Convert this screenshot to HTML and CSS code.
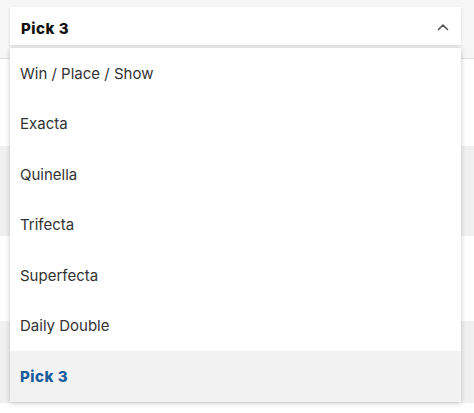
FILE: index.html
```html
<!DOCTYPE html>
<html>
<head>
<meta charset="utf-8">
<link rel="stylesheet" href="styles.css">
</head>
<body>
<div class="page">
  <div class="top">
    <div class="select">
      <div class="select-head">
        <span class="select-value">Pick 3</span>
        <svg class="chev" width="12" height="8" viewBox="0 0 12 8"><path d="M1.5 6.5 L6 2 L10.5 6.5" fill="none" stroke="#555" stroke-width="1.6" stroke-linecap="round" stroke-linejoin="round"/></svg>
      </div>
      <ul class="menu">
        <li class="opt">Win / Place / Show</li>
        <li class="opt">Exacta</li>
        <li class="opt">Quinella</li>
        <li class="opt">Trifecta</li>
        <li class="opt">Superfecta</li>
        <li class="opt">Daily Double</li>
        <li class="opt active">Pick 3</li>
      </ul>
    </div>
  </div>
  <div class="band white h87"></div>
  <div class="band grey h90"></div>
  <div class="band white h85"></div>
  <div class="band grey h82"></div>
  <div class="band white h20"></div>
</div>
</body>
</html>
```
FILE: styles.css
```css
html, body {
  margin: 0;
  padding: 0;
}
body {
  background: #f4f4f4;
  font-family: "Inter", "Noto Sans", sans-serif;
  color: #333;
}
.page {
  width: 474px;
  height: 413px;
  overflow: hidden;
}
.top {
  background: #f6f6f6;
  border-bottom: 1px solid #dcdcdc;
  padding: 7px 13px 13px 10px;
}
.select {
  position: relative;
}
.select-head {
  height: 38px;
  box-sizing: border-box;
  background: #fff;
  box-shadow: 0 1px 3px rgba(0,0,0,0.12);
  display: flex;
  align-items: center;
  justify-content: space-between;
  padding: 4px 12px 0 11px;
}
.select-value {
  font-weight: 800;
  font-size: 15px;
  color: #111;
  letter-spacing: 0.5px;
}
.chev {
  display: block;
  margin-top: -3px;
}
.menu {
  position: absolute;
  top: 41px;
  left: 0;
  right: 0;
  margin: 0;
  padding: 0;
  list-style: none;
  background: #fff;
  box-shadow: 0 1px 5px rgba(0,0,0,0.22);
  z-index: 2;
}
.opt {
  height: 50.5px;
  display: flex;
  align-items: center;
  padding-left: 10px;
  font-size: 15px;
  color: #333;
}
.opt.active {
  background: #f2f2f2;
  color: #1b5c9c;
  font-weight: 800;
  letter-spacing: 0.5px;
}
.band.white { background: #fff; }
.band.grey { background: #f0f0f0; }
.h87 { height: 87px; }
.h90 { height: 90px; }
.h85 { height: 85px; }
.h82 { height: 82px; }
.h20 { height: 20px; }
```
